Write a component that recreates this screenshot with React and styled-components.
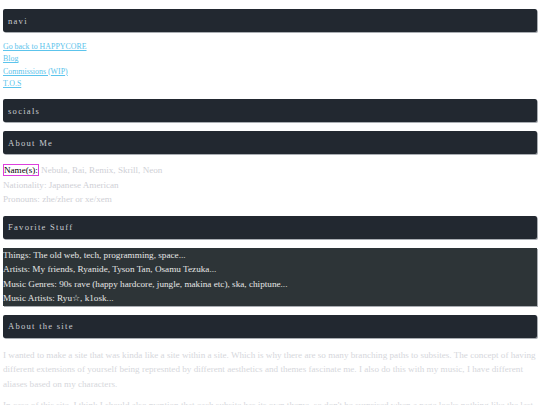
import React from "react";
import styled, { createGlobalStyle } from "styled-components";

const Global = createGlobalStyle`
  html, body { margin: 0; padding: 0; background: #ffffff; }
  body { font-family: "Liberation Serif", "Times New Roman", serif; font-size: 9px; }
`;

const Page = styled.div`
  padding: 0 3px 0 3px;
  display: flex;
  flex-direction: column;
`;

const Header = styled.h2`
  margin: 9px 0 0 0;
  height: 23px;
  box-sizing: border-box;
  display: flex;
  align-items: center;
  padding-left: 5px;
  background: #222830;
  border-radius: 2px;
  box-shadow: 1px 1px 0 #a9adb2;
  color: #c9ccd1;
  font-family: "Liberation Serif", "Times New Roman", serif;
  font-weight: normal;
  font-size: 8.6px;
  letter-spacing: 1.25px;
`;

const LinkList = styled.div`
  margin-top: 9px;
  display: flex;
  flex-direction: column;
  font-size: 7.9px;
  line-height: 12.25px;
`;

const NavLink = styled.a`
  color: #5cc4ec;
  text-decoration: underline;
  align-self: flex-start;
`;

const InfoBlock = styled.div`
  margin-top: 9px;
  display: flex;
  flex-direction: column;
  font-size: 9.1px;
  line-height: 14.5px;
  color: #cfd0d6;
`;

const Label = styled.span`
  color: #000;
  border: 1.5px solid #dd3fdd;
  padding: 0;
`;

const FavBox = styled.div`
  margin-top: 9px;
  background: #2d3437;
  box-shadow: 1px 1px 0 #a9adb2;
  color: #e6e6e6;
  font-size: 9.2px;
  line-height: 14.5px;
  display: flex;
  flex-direction: column;
`;

const Para = styled.p`
  margin: ${(p) => (p.$first ? "10px" : "7px")} 0 0 0;
  font-size: 9.15px;
  line-height: 14.6px;
  color: #d6d7dc;
`;

export default function App() {
  return (
    <>
      <Global />
      <Page>
        <Header>navi</Header>
        <LinkList>
          <NavLink href="#">Go back to HAPPYCORE</NavLink>
          <NavLink href="#">Blog</NavLink>
          <NavLink href="#">Commissions (WIP)</NavLink>
          <NavLink href="#">T.O.S</NavLink>
        </LinkList>
        <Header>socials</Header>
        <Header>About Me</Header>
        <InfoBlock>
          <span>
            <Label>Name(s):</Label> Nebula, Rai, Remix, Skrill, Neon
          </span>
          <span>Nationality: Japanese American</span>
          <span>Pronouns: zhe/zher or xe/xem</span>
        </InfoBlock>
        <Header>Favorite Stuff</Header>
        <FavBox>
          <span>Things: The old web, tech, programming, space...</span>
          <span>Artists: My friends, Ryanide, Tyson Tan, Osamu Tezuka...</span>
          <span>Music Genres: 90s rave (happy hardcore, jungle, makina etc), ska, chiptune...</span>
          <span>Music Artists: Ryu☆, k1osk...</span>
        </FavBox>
        <Header>About the site</Header>
        <Para $first>
          I wanted to make a site that was kinda like a site within a site. Which is why there are so many branching paths to subsites. The concept of having different extensions of yourself being represnted by different aesthetics and themes fascinate me. I also do this with my music, I have different aliases based on my characters.
        </Para>
        <Para>
          In case of this site, I think I should also mention that each subsite has its own theme, so don't be surprised when a page looks nothing like the last one.
        </Para>
      </Page>
    </>
  );
}
